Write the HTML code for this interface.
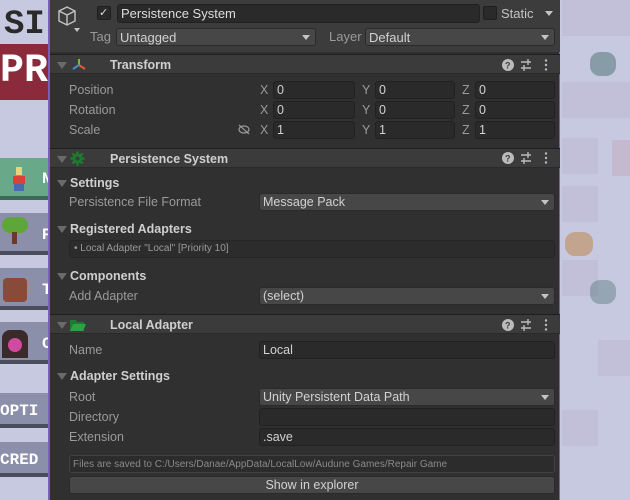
<!DOCTYPE html>
<html><head><style>
*{box-sizing:border-box;margin:0;padding:0}
body{width:630px;height:500px;overflow:hidden;background:#c6c9df;font-family:"Liberation Sans",sans-serif;font-size:12px;color:#c4c4c4;position:relative}
.a{position:absolute}
#panel{left:50px;top:0;width:510px;height:500px;background:#303030;border-right:1px solid #7a5cc8}
#lb{left:48px;top:0;width:2px;height:500px;background:#7a5cc8}
.t{position:absolute;white-space:nowrap;line-height:14px}
.b{font-weight:bold;color:#cfcfcf}
.f{position:absolute;height:18px;background:#2a2a2a;border:1px solid #212121;border-radius:3px;padding-left:3px;padding-top:1px;line-height:15px;color:#d2d2d2;font-size:12.5px}
.d{position:absolute;height:18px;background:#474747;border:1px solid #2a2a2a;border-radius:3px;padding-left:3px;padding-top:1px;line-height:15px;color:#d2d2d2;font-size:12.5px}
.d:after{content:"";position:absolute;right:5px;top:6px;border-left:4px solid transparent;border-right:4px solid transparent;border-top:5px solid #c4c4c4}
.hd{position:absolute;left:50px;width:510px;height:20px;background:#3b3b3b;border-top:1px solid #1f1f1f;border-bottom:1px solid #2a2a2a}
.tri{position:absolute;width:0;height:0;border-left:5px solid transparent;border-right:5px solid transparent;border-top:7px solid #6a6a6a}
.lbl{color:#9a9a9a;font-size:12.5px}
.tile{position:absolute;width:36px;height:36px;background:#b0a0c0;opacity:.22}
.btn{position:absolute;left:0;width:48px;background:#8b8fa9;border-bottom:4px solid #4a4d5c}
</style></head><body>
<div class="t" style="left:4px;top:8px;font:bold 34px 'Liberation Mono',monospace;color:#2a2a2a;line-height:34px">SI</div>
<div class="a" style="left:0;top:44px;width:48px;height:56px;background:#8a2a3a"></div>
<div class="t" style="left:0;top:50px;font:bold 40px 'Liberation Mono',monospace;color:#fff;line-height:44px">PR</div>
<div class="btn" style="top:158px;height:42px;background:#6aa88a;border-color:#3a6a55"></div>
<div class="a" style="left:16px;top:167px;width:6px;height:8px;background:#f0d080"></div>
<div class="a" style="left:13px;top:176px;width:12px;height:8px;background:#d9413a"></div>
<div class="a" style="left:14px;top:184px;width:10px;height:7px;background:#4a6ab0"></div>
<div class="t" style="left:42px;top:170px;font:bold 16px monospace;color:#fff">N</div>
<div class="btn" style="top:213px;height:42px"></div>
<div class="a" style="left:2px;top:217px;width:26px;height:16px;background:#5fa63a;border-radius:8px"></div>
<div class="a" style="left:12px;top:232px;width:5px;height:12px;background:#6a3a2a"></div>
<div class="t" style="left:42px;top:226px;font:bold 16px monospace;color:#fff">P</div>
<div class="btn" style="top:268px;height:42px"></div>
<div class="a" style="left:3px;top:278px;width:24px;height:24px;background:#8a4a3a;border-radius:4px"></div>
<div class="t" style="left:42px;top:281px;font:bold 16px monospace;color:#fff">T</div>
<div class="btn" style="top:322px;height:42px"></div>
<div class="a" style="left:2px;top:330px;width:26px;height:28px;background:#3a2a2a;border-radius:8px 8px 0 0"></div>
<div class="a" style="left:8px;top:338px;width:14px;height:14px;background:#d04aa0;border-radius:50%"></div>
<div class="t" style="left:42px;top:335px;font:bold 16px monospace;color:#fff">C</div>
<div class="btn" style="top:393px;height:35px"></div>
<div class="t" style="left:0;top:402px;font:bold 16px monospace;color:#fff">OPTI</div>
<div class="btn" style="top:442px;height:35px"></div>
<div class="t" style="left:0;top:451px;font:bold 16px monospace;color:#fff">CRED</div>
<div class="tile" style="left:562px;top:0"></div><div class="tile" style="left:598px;top:0"></div>
<div class="tile" style="left:590px;top:52px;background:#4a7070;width:26px;height:24px;border-radius:10px;opacity:.5"></div>
<div class="tile" style="left:562px;top:82px"></div><div class="tile" style="left:598px;top:82px"></div>
<div class="tile" style="left:562px;top:138px"></div><div class="tile" style="left:612px;top:140px;background:#c08090"></div>
<div class="tile" style="left:562px;top:186px"></div>
<div class="tile" style="left:565px;top:232px;background:#c08040;width:28px;height:24px;border-radius:10px;opacity:.5"></div>
<div class="tile" style="left:562px;top:260px"></div><div class="tile" style="left:590px;top:280px;background:#4a7070;width:26px;height:24px;border-radius:10px;opacity:.4"></div>
<div class="tile" style="left:598px;top:340px"></div>
<div class="tile" style="left:562px;top:410px"></div>

<div id="lb" class="a"></div>
<div id="panel" class="a"></div>
<div class="a" style="left:50px;top:0;width:510px;height:52px;background:#3c3c3c"></div>
<svg class="a" style="left:56px;top:5px" width="26" height="28" viewBox="0 0 26 28" fill="none" stroke="#c4c4c4" stroke-width="1.4"><path d="M3 6 L11 2 L19 6 L19 16 L11 20 L3 16 Z M3 6 L11 10 L19 6 M11 10 L11 20"/><path d="M18 23 L24 23 L21 27Z" fill="#c4c4c4" stroke="none"/></svg>
<div class="a" style="left:97px;top:6px;width:14px;height:14px;background:#2a2a2a;border:1px solid #1f1f1f;border-radius:2px"></div>
<div class="t" style="left:99px;top:6px;color:#ddd;font-size:11px">✓</div>
<div class="f" style="left:117px;top:4px;width:363px;height:19px;font-size:13px;color:#ddd">Persistence System</div>
<div class="a" style="left:483px;top:6px;width:14px;height:14px;background:#2a2a2a;border:1px solid #1f1f1f;border-radius:2px"></div>
<div class="t" style="left:501px;top:7px;font-size:13px">Static</div>
<div class="a" style="left:545px;top:11px;border-left:4px solid transparent;border-right:4px solid transparent;border-top:5px solid #c4c4c4"></div>
<div class="t lbl" style="left:90px;top:30px;font-size:13px">Tag</div>
<div class="d" style="left:116px;top:28px;width:200px;font-size:13px">Untagged</div>
<div class="t lbl" style="left:329px;top:30px;font-size:13px">Layer</div>
<div class="d" style="left:365px;top:28px;width:190px;font-size:13px">Default</div>

<div class="hd" style="top:54px"></div>
<div class="tri" style="left:57px;top:62px"></div>
<svg class="a" style="left:71px;top:58px" width="16" height="14"><path d="M8 1 V7" stroke="#6fc040" stroke-width="2"/><path d="M8 7 L2 11" stroke="#3d8fd0" stroke-width="2"/><path d="M8 7 L14 11" stroke="#e05a3a" stroke-width="2"/></svg>
<div class="t b" style="left:110px;top:58px;font-size:12.5px">Transform</div>
<div class="t lbl" style="left:69px;top:83px">Position</div>
<div class="t lbl" style="left:69px;top:103px">Rotation</div>
<div class="t lbl" style="left:69px;top:123px">Scale</div>
<svg class="a" style="left:237px;top:124px" width="14" height="11" fill="none" stroke="#9a9a9a" stroke-width="1.2"><ellipse cx="7" cy="5.5" rx="5" ry="3.5"/><path d="M2 1 L12 10"/></svg>
<div class="t lbl" style="left:260px;top:83px">X</div><div class="f" style="left:273px;top:81px;width:82px">0</div>
<div class="t lbl" style="left:362px;top:83px">Y</div><div class="f" style="left:375px;top:81px;width:80px">0</div>
<div class="t lbl" style="left:462px;top:83px">Z</div><div class="f" style="left:475px;top:81px;width:80px">0</div>
<div class="t lbl" style="left:260px;top:103px">X</div><div class="f" style="left:273px;top:101px;width:82px">0</div>
<div class="t lbl" style="left:362px;top:103px">Y</div><div class="f" style="left:375px;top:101px;width:80px">0</div>
<div class="t lbl" style="left:462px;top:103px">Z</div><div class="f" style="left:475px;top:101px;width:80px">0</div>
<div class="t lbl" style="left:260px;top:123px">X</div><div class="f" style="left:273px;top:121px;width:82px">1</div>
<div class="t lbl" style="left:362px;top:123px">Y</div><div class="f" style="left:375px;top:121px;width:80px">1</div>
<div class="t lbl" style="left:462px;top:123px">Z</div><div class="f" style="left:475px;top:121px;width:80px">1</div>

<div class="hd" style="top:148px"></div>
<div class="tri" style="left:57px;top:156px"></div>
<svg class="a" style="left:70px;top:151px" width="15" height="15"><circle cx="7.5" cy="7.5" r="5" fill="#1f7a30"/><path d="M7.5 0.5V14.5M0.5 7.5H14.5M2.5 2.5L12.5 12.5M12.5 2.5L2.5 12.5" stroke="#1f7a30" stroke-width="2.6"/><circle cx="7.5" cy="7.5" r="2" fill="#3b3b3b"/></svg>
<div class="t b" style="left:110px;top:152px;font-size:12.5px">Persistence System</div>
<div class="tri" style="left:57px;top:180px"></div>
<div class="t b" style="left:70px;top:176px;font-size:12.5px">Settings</div>
<div class="t lbl" style="left:69px;top:195px">Persistence File Format</div>
<div class="d" style="left:259px;top:193px;width:296px">Message Pack</div>
<div class="tri" style="left:57px;top:226px"></div>
<div class="t b" style="left:70px;top:222px;font-size:12.5px">Registered Adapters</div>
<div class="a" style="left:69px;top:240px;width:486px;height:18px;background:#2c2c2c;border:1px solid #262626;border-radius:3px"></div>
<div class="t lbl" style="left:74px;top:242px;font-size:10px">• Local Adapter "Local" [Priority 10]</div>
<div class="tri" style="left:57px;top:273px"></div>
<div class="t b" style="left:70px;top:269px;font-size:12.5px">Components</div>
<div class="t lbl" style="left:69px;top:289px">Add Adapter</div>
<div class="d" style="left:259px;top:287px;width:296px">(select)</div>

<div class="hd" style="top:314px"></div>
<div class="tri" style="left:57px;top:322px"></div>
<svg class="a" style="left:70px;top:319px" width="16" height="12"><path d="M0 1 H6 L7 3 H14 V12 H0Z" fill="#1f7a30"/><path d="M3 5 H16 L13 12 H0Z" fill="#2fa044"/></svg>
<div class="t b" style="left:110px;top:318px;font-size:12.5px">Local Adapter</div>
<div class="t lbl" style="left:69px;top:343px">Name</div>
<div class="f" style="left:259px;top:341px;width:296px">Local</div>
<div class="tri" style="left:57px;top:373px"></div>
<div class="t b" style="left:70px;top:369px;font-size:12.5px">Adapter Settings</div>
<div class="t lbl" style="left:69px;top:390px">Root</div>
<div class="d" style="left:259px;top:388px;width:296px">Unity Persistent Data Path</div>
<div class="t lbl" style="left:69px;top:410px">Directory</div>
<div class="f" style="left:259px;top:408px;width:296px"></div>
<div class="t lbl" style="left:69px;top:430px">Extension</div>
<div class="f" style="left:259px;top:428px;width:296px">.save</div>
<div class="a" style="left:69px;top:455px;width:486px;height:18px;background:#2c2c2c;border:1px solid #424242;border-radius:3px"></div>
<div class="t lbl" style="left:73px;top:458px;font-size:10px;color:#8a8a8a">Files are saved to C:/Users/Danae/AppData/LocalLow/Audune Games/Repair Game</div>
<div class="a" style="left:69px;top:476px;width:486px;height:18px;background:#474747;border:1px solid #2a2a2a;border-radius:3px"></div>
<div class="t" style="left:69px;top:478px;width:486px;text-align:center;color:#d2d2d2;font-size:12.5px">Show in explorer</div>

<svg class="a" style="left:500px;top:58px" width="56" height="14"><circle cx="8" cy="7" r="6" fill="#bbb"/><text x="5" y="10.5" font-size="9" font-weight="bold" fill="#3b3b3b" font-family="Liberation Sans">?</text><path d="M21 4 H31 M21 10 H31 M28 1 V7 M24 7 V13" stroke="#bbb" stroke-width="1.4"/><circle cx="46" cy="2.5" r="1.2" fill="#bbb"/><circle cx="46" cy="7" r="1.2" fill="#bbb"/><circle cx="46" cy="11.5" r="1.2" fill="#bbb"/></svg>
<svg class="a" style="left:500px;top:151px" width="56" height="14"><circle cx="8" cy="7" r="6" fill="#bbb"/><text x="5" y="10.5" font-size="9" font-weight="bold" fill="#3b3b3b" font-family="Liberation Sans">?</text><path d="M21 4 H31 M21 10 H31 M28 1 V7 M24 7 V13" stroke="#bbb" stroke-width="1.4"/><circle cx="46" cy="2.5" r="1.2" fill="#bbb"/><circle cx="46" cy="7" r="1.2" fill="#bbb"/><circle cx="46" cy="11.5" r="1.2" fill="#bbb"/></svg>
<svg class="a" style="left:500px;top:318px" width="56" height="14"><circle cx="8" cy="7" r="6" fill="#bbb"/><text x="5" y="10.5" font-size="9" font-weight="bold" fill="#3b3b3b" font-family="Liberation Sans">?</text><path d="M21 4 H31 M21 10 H31 M28 1 V7 M24 7 V13" stroke="#bbb" stroke-width="1.4"/><circle cx="46" cy="2.5" r="1.2" fill="#bbb"/><circle cx="46" cy="7" r="1.2" fill="#bbb"/><circle cx="46" cy="11.5" r="1.2" fill="#bbb"/></svg>
</body></html>
